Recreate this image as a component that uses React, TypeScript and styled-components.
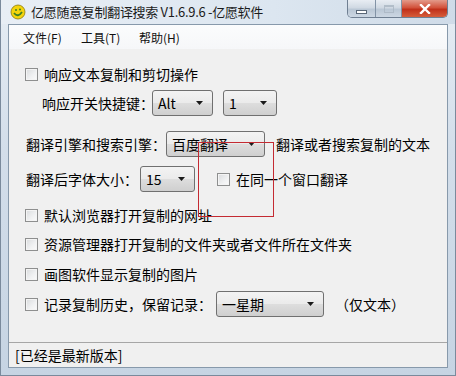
import styled, { createGlobalStyle } from 'styled-components'

const GlobalStyle = createGlobalStyle`
  html, body {
    margin: 0;
    padding: 0;
    width: 456px;
    height: 376px;
    overflow: hidden;
    background: #dfe6ee;
  }
  * {
    box-sizing: border-box;
  }
`

const FONT = `"Noto Sans CJK SC", "Noto Sans", sans-serif`

const Arrow = () => (
  <svg width="7" height="4" viewBox="0 0 7 4">
    <path d="M0 0 L7 0 L3.5 4 Z" fill="#1a1a1a" />
  </svg>
)

const AppIcon = () => (
  <svg width="16" height="16" viewBox="0 0 16 16">
    <circle cx="8" cy="8" r="7" fill="#f4d40c" stroke="#8a7a10" strokeWidth="0.8" />
    <path d="M4 9 Q8 14 12 8" stroke="#3f7f24" strokeWidth="1.8" fill="none" />
    <circle cx="6" cy="6" r="1" fill="#3f7f24" />
    <circle cx="10" cy="5.5" r="1" fill="#3f7f24" />
  </svg>
)

const Dropdown = ({ value, width }: { value: string; width: number }) => (
  <Select $width={width}>
    <SelectValue>{value}</SelectValue>
    <Arrow />
  </Select>
)

const App = () => {
  return (
    <>
      <GlobalStyle />
      <Window>
        <TitleBar>
          <AppIcon />
          <Title>亿愿随意复制翻译搜索 V1.6.9.6 -亿愿软件</Title>
          <Controls>
            <CtrlButton $kind="min">
              <MinGlyph />
            </CtrlButton>
            <CtrlButton $kind="max">
              <MaxGlyph />
            </CtrlButton>
            <CtrlButton $kind="close">
              <svg width="12" height="10" viewBox="0 0 12 10">
                <path
                  d="M2 1 L10 9 M10 1 L2 9"
                  stroke="#fff"
                  strokeWidth="2.4"
                  strokeLinecap="square"
                />
              </svg>
            </CtrlButton>
          </Controls>
        </TitleBar>
        <Client>
          <MenuBar>
            <MenuItem>文件(F)</MenuItem>
            <MenuItem>工具(T)</MenuItem>
            <MenuItem>帮助(H)</MenuItem>
          </MenuBar>
          <Content>
            <Row $top={12}>
              <Check />
              <Label>响应文本复制和剪切操作</Label>
            </Row>
            <Row $top={3} $indent={17}>
              <Label>响应开关快捷键：</Label>
              <Gap $w={-2} />
              <Dropdown value="Alt" width={61} />
              <Gap $w={10} />
              <Dropdown value="1" width={54} />
            </Row>
            <Row $top={15} $indent={1}>
              <Label>翻译引擎和搜索引擎：</Label>
              <Dropdown value="百度翻译" width={99} />
              <Gap $w={11} />
              <Label>翻译或者搜索复制的文本</Label>
            </Row>
            <Row $top={9} $indent={1}>
              <Label>翻译后字体大小：</Label>
              <Gap $w={2} />
              <Dropdown value="15" width={55} />
              <Gap $w={22} />
              <Check />
              <Label>在同一个窗口翻译</Label>
            </Row>
            <Row $top={10}>
              <Check />
              <Label>默认浏览器打开复制的网址</Label>
            </Row>
            <Row $top={3}>
              <Check />
              <Label>资源管理器打开复制的文件夹或者文件所在文件夹</Label>
            </Row>
            <Row $top={4}>
              <Check />
              <Label>画图软件显示复制的图片</Label>
            </Row>
            <Row $top={4}>
              <Check />
              <Label>记录复制历史，保留记录：</Label>
              <Gap $w={4} />
              <Dropdown value="一星期" width={108} />
              <Gap $w={11} />
              <Label>（仅文本）</Label>
            </Row>
          </Content>
          <StatusBar>[已经是最新版本]</StatusBar>
        </Client>
        <Highlight />
      </Window>
    </>
  )
}

const Window = styled.div`
  position: relative;
  width: 456px;
  height: 376px;
  display: flex;
  flex-direction: column;
  font-family: ${FONT};
  color: #000;
  background: linear-gradient(180deg, #e6edf4 0%, #d3deea 40%, #c6d4e3 100%);
  border: 1px solid #7a8a9c;
  border-top: none;
`

const TitleBar = styled.div`
  height: 24px;
  display: flex;
  align-items: flex-start;
  padding-left: 9px;
  padding-top: 4px;
  background: linear-gradient(90deg, #e8eef5 0%, #dce6f0 60%, #cfdbe8 100%);
`

const Title = styled.span`
  margin-left: 5px;
  font-size: 13px;
  line-height: 16px;
  letter-spacing: -0.3px;
  color: #1b1b1b;
`

const Controls = styled.div`
  margin-left: auto;
  margin-right: 7px;
  margin-top: -4px;
  display: flex;
  height: 18px;
  border: 1px solid #6f7f92;
  border-top: none;
  border-radius: 0 0 5px 5px;
  overflow: hidden;
`

const CtrlButton = styled.div<{ $kind: 'min' | 'max' | 'close' }>`
  width: ${p => (p.$kind === 'close' ? '46px' : p.$kind === 'min' ? '27px' : '26px')};
  display: flex;
  align-items: center;
  justify-content: center;
  border-left: ${p => (p.$kind === 'min' ? 'none' : '1px solid #8293a6')};
  background: ${p =>
    p.$kind === 'close'
      ? 'linear-gradient(180deg, #e39a8a 0%, #d2523b 45%, #c0301a 55%, #d65d3a 100%)'
      : 'linear-gradient(180deg, #e8edf3 0%, #d0d9e3 45%, #bac7d5 55%, #ccd7e3 100%)'};
`

const MinGlyph = styled.div`
  width: 11px;
  height: 4px;
  margin-top: 6px;
  background: #fff;
  border: 1px solid #5a6878;
`

const MaxGlyph = styled.div`
  width: 10px;
  height: 8px;
  border: 1px solid #a9b5c2;
  border-top-width: 2px;
  background: transparent;
  opacity: 0.8;
`

const Client = styled.div`
  flex: 1;
  margin: 0 7px 7px 7px;
  display: flex;
  flex-direction: column;
  background: #f0f0f0;
  border: 1px solid #8799ab;
`

const MenuBar = styled.div`
  height: 24px;
  display: flex;
  align-items: center;
  padding-left: 14px;
  background: linear-gradient(180deg, #fbfcfd 0%, #f6f7f9 100%);
`

const MenuItem = styled.span`
  width: 58px;
  font-size: 12px;
  color: #111;
`

const Content = styled.div`
  flex: 1;
  display: flex;
  flex-direction: column;
  padding-left: 16px;
`

const Row = styled.div<{ $top: number; $indent?: number }>`
  height: 26px;
  margin-top: ${p => p.$top}px;
  padding-left: ${p => p.$indent ?? 0}px;
  display: flex;
  align-items: center;
`

const Label = styled.span`
  font-size: 14px;
  line-height: 26px;
  white-space: nowrap;
  color: #000;
`

const Gap = styled.div<{ $w: number }>`
  width: ${p => Math.max(p.$w, 0)}px;
  margin-left: ${p => Math.min(p.$w, 0)}px;
  flex-shrink: 0;
`

const Check = styled.div`
  width: 13px;
  height: 13px;
  margin-right: 6px;
  flex-shrink: 0;
  border: 1px solid #8e8f8f;
  background: linear-gradient(135deg, #d9dbdd 0%, #f0f1f2 60%, #fbfbfb 100%);
  box-shadow: inset 0 0 0 1px #f4f4f4;
`

const Select = styled.div<{ $width: number }>`
  width: ${p => p.$width}px;
  height: 26px;
  flex-shrink: 0;
  display: flex;
  align-items: center;
  padding: 0 9px 0 5px;
  border: 1px solid #707070;
  border-radius: 3px;
  background: linear-gradient(180deg, #f3f3f3 0%, #ebebeb 48%, #dddddd 52%, #cfcfcf 100%);
`

const SelectValue = styled.span`
  flex: 1;
  font-size: 14px;
  color: #000;
  white-space: nowrap;
`

const StatusBar = styled.div`
  height: 25px;
  display: flex;
  align-items: center;
  padding-left: 6px;
  font-size: 14px;
  border-top: 1px solid #a6a6a6;
  background: #f0f0f0;
`

const Highlight = styled.div`
  position: absolute;
  left: 197px;
  top: 142px;
  width: 76px;
  height: 75px;
  border: 1px solid #c42a32;
  pointer-events: none;
`

export default App
